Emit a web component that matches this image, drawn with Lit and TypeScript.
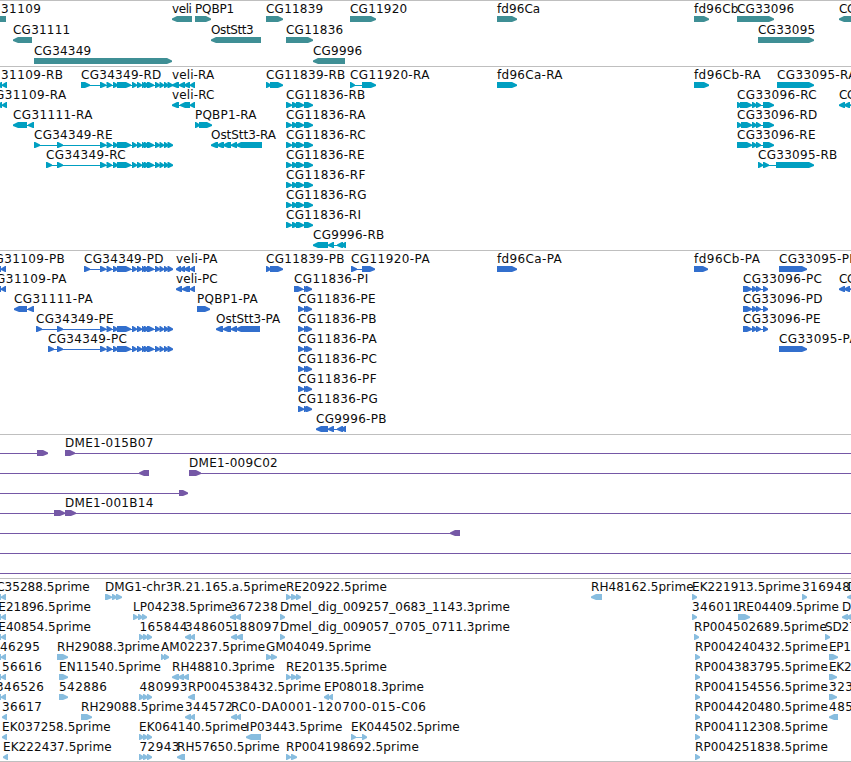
import { LitElement, html, svg, css } from "lit";
import { customElement, property } from "lit/decorators.js";

type Span = [number, number];
interface Feature {
  label: string;
  x: number;
  rev: boolean;
  exons: Span[];
  line?: Span;
}
interface Track {
  name: string;
  pitch: number;
  rows: Feature[][];
}

const VIEW = 851;

// Advance widths of the label face, in pixels.
const ADVANCE: Record<string, number> = {
  A: 8, B: 7.8, C: 8.2, D: 8.8, E: 7, G: 9, H: 8.8, I: 3.5, K: 7.6, L: 6.2, M: 10.2, N: 9, O: 9.4,
  P: 7, Q: 9.4, R: 7.8, S: 6.8, a: 6.8, b: 8, c: 6.2, d: 8, e: 7, f: 4.2, g: 7.8, h: 7.8, i: 3.2, l: 3.2,
  m: 11.4, p: 7.8, r: 4.8, s: 5.6, t: 4.3, v: 6.5, "-": 6.5, "_": 5.6, ".": 3.8,
};
const measure = (s: string) => [...s].reduce((w, c) => w + (ADVANCE[c] ?? 8), 0);

const f = (label: string, x: number, ...exons: Span[]): Feature => ({ label, x, rev: false, exons });
const r = (label: string, x: number, ...exons: Span[]): Feature => ({ label, x, rev: true, exons });
const lined = (feature: Feature, a: number, b: number): Feature => ({ ...feature, line: [a, b] });

const tail: Span[] = [
  [100, 106], [106.5, 112], [113, 118], [117, 131], [132, 137], [137, 142], [142, 146],
  [144, 149], [147, 154], [155, 160], [159.5, 164], [164, 168.5], [167.5, 173],
];
const ra: Span[] = [[286, 292], [292, 298], [296, 304], [304, 313]];
const pa: Span[] = [[298, 304], [304, 309], [306, 312]];
const left: Span[] = [[-4, 1], [1, 6]];
const left2: Span[] = [[-3, 2], [2, 7]];
const est: Span[] = [[139, 144], [143, 148], [147, 152]];
const re: Span[] = [[286, 291], [291, 297], [296, 301]];
const rc33: Span[] = [[752, 757], [756, 761], [763, 774]];
const pc33: Span[] = [[743, 752], [752, 757], [756, 761], [763, 768]];

const TRACKS: Track[] = [
  {
    name: "genes",
    pitch: 21,
    rows: [
      [
        r("31109", 1, [-20, 6]), r("veli", 172, [172, 192]), f("PQBP1", 195, [195, 211]),
        f("CG11839", 266, [266, 283]), f("CG11920", 350, [350, 376]), f("fd96Ca", 497, [497, 517]),
        f("fd96Cb", 694, [694, 709]), f("CG33096", 737, [737, 774]), r("CG", 839, [839, 870]),
      ],
      [
        r("CG31111", 13, [13, 32]), r("OstStt3", 211, [211, 261]), f("CG11836", 286, [286, 313]),
        f("CG33095", 758, [758, 814]),
      ],
      [f("CG34349", 34, [34, 172]), r("CG9996", 313, [313, 345])],
    ],
  },
  {
    name: "transcripts",
    pitch: 20,
    rows: [
      [
        r("31109-RB", 1, ...left2), f("CG34349-RD", 81, [81, 90], ...tail),
        r("veli-RA", 172, [172, 179], [179, 185], [184, 190], [190, 195]),
        f("CG11839-RB", 266, [266, 271], [270, 283]), f("CG11920-RA", 350, [350, 355], [362, 376]),
        f("fd96Ca-RA", 497, [497, 517]), f("fd96Cb-RA", 694, [694, 709]), f("CG33095-RA", 777, [777, 814]),
      ],
      [
        r("G31109-RA", -5, ...left2), r("veli-RC", 172, [172, 179], [180, 190], [190, 195]),
        f("CG11836-RB", 286, ...ra), f("CG33096-RC", 737, [737, 742], [740, 752], ...rc33),
        r("CG", 839, [839, 845], [844, 850], [850, 856]),
      ],
      [
        r("CG31111-RA", 13, [13, 27], [28, 34]), f("PQBP1-RA", 195, [195, 200], [199, 212]),
        f("CG11836-RA", 286, ...ra), f("CG33096-RD", 737, [737, 742], [741, 752], ...rc33),
      ],
      [
        f("CG34349-RE", 34, [34, 40], [57, 63], ...tail),
        r("OstStt3-RA", 211, [211, 218], [217, 224], [223, 231], [231, 237], [236, 262]),
        f("CG11836-RC", 286, ...ra), f("CG33096-RE", 737, [737, 752], ...rc33),
      ],
      [
        f("CG34349-RC", 46, [46, 52], [57, 63], ...tail), f("CG11836-RE", 286, ...ra),
        f("CG33095-RB", 758, [758, 763], [763, 769], [776, 814]),
      ],
      [f("CG11836-RF", 286, ...ra)],
      [f("CG11836-RG", 286, ...ra)],
      [f("CG11836-RI", 286, ...ra)],
      [r("CG9996-RB", 313, [313, 328], [328, 334], [337, 343], [341, 346])],
    ],
  },
  {
    name: "proteins",
    pitch: 20,
    rows: [
      [
        r("G31109-PB", -5.5, ...left), f("CG34349-PD", 84, [84, 90], ...tail),
        r("veli-PA", 176, [176, 181], [180, 185], [184, 190], [190, 195]),
        f("CG11839-PB", 266, [266, 271], [270, 283]), f("CG11920-PA", 351, [351, 357], [362, 375]),
        f("fd96Ca-PA", 497, [497, 517]), f("fd96Cb-PA", 694, [694, 708]), f("CG33095-PB", 779, [779, 807]),
      ],
      [
        r("G31109-PA", -4, ...left), r("veli-PC", 176, [176, 182], [182, 190], [190, 195]),
        f("CG11836-PI", 294, [294, 303], [304, 309], [306, 312]), f("CG33096-PC", 743, ...pc33),
        r("CG", 839, [839, 845], [844, 850], [850, 856]),
      ],
      [
        r("CG31111-PA", 14, [14, 27], [28, 34]), f("PQBP1-PA", 197, [197, 210]),
        f("CG11836-PE", 298, ...pa), f("CG33096-PD", 743, ...pc33),
      ],
      [
        f("CG34349-PE", 36, [36, 42], [57, 63], ...tail),
        r("OstStt3-PA", 216, [216, 223], [223, 231], [231, 237], [236, 260]),
        f("CG11836-PB", 298, ...pa), f("CG33096-PE", 743, ...pc33),
      ],
      [
        f("CG34349-PC", 48, [48, 54], [57, 63], ...tail), f("CG11836-PA", 298, ...pa),
        f("CG33095-PA", 779, [779, 807]),
      ],
      [f("CG11836-PC", 298, ...pa)],
      [f("CG11836-PF", 298, ...pa)],
      [f("CG11836-PG", 298, ...pa)],
      [r("CG9996-PB", 316, [316, 328], [328, 334], [337, 343], [341, 346])],
    ],
  },
  {
    name: "clones",
    pitch: 20,
    rows: [
      [lined(f("", 0, [37, 48]), 0, 48), lined(f("DME1-015B07", 65, [65, 75]), 65, VIEW)],
      [lined(r("", 0, [139, 149]), 0, 149), lined(f("DME1-009C02", 189, [189, 201]), 189, VIEW)],
      [lined(f("", 0, [179, 188]), 0, 188)],
      [lined(f("", 0, [54, 65]), 0, 65), lined(f("DME1-001B14", 65, [65, 76]), 65, VIEW)],
      [lined(r("", 0, [450, 460]), 0, 460)],
      [lined(f("", 0), 0, VIEW)],
      [lined(f("", 0), 0, VIEW)],
    ],
  },
  {
    name: "ests",
    pitch: 20,
    rows: [
      [
        r("EC35288.5prime", -11.5, ...left),
        f("DMG1-chr3R.21.165.a.5prime", 105, [105, 112], [112, 117], [116, 122]),
        f("RE20922.5prime", 286, ...re), r("RH48162.5prime", 591, [591, 602]),
        f("EK221913.5prime", 692, [692, 697]), f("316948", 802, [802, 807]), r("D", 847.5, [847, 856]),
      ],
      [
        r("RE21896.5prime", -10, ...left), f("LP04238.5prime", 133, [133, 138], [138, 143], [142, 147]),
        r("367238", 230, [230, 236], [235, 241]), f("Dmel_dig_009257_0683_1143.3prime", 280, [280, 285]),
        f("346011", 692, [692, 697]), f("RE04409.5prime", 738, [738, 750]), r("D", 842, [842, 848], [846, 856]),
      ],
      [
        r("RE40854.5prime", -10, ...left), f("165844", 139.5, ...est), r("348605", 185, [185, 191], [190, 195]),
        r("188097", 231.5, [231, 237], [236, 243]), f("Dmel_dig_009057_0705_0711.3prime", 280, [280, 285]),
        f("RP004502689.5prime", 694, [694, 699]), f("SD27", 825, [825, 830]),
      ],
      [
        r("46295", 0, ...left), f("RH29088.3prime", 57, [57, 68]), f("AM02237.5prime", 161, [161, 165], [164, 169]),
        f("GM04049.5prime", 266, [266, 272], [271, 277]), f("RP004240432.5prime", 695, [695, 700]),
        f("EP1", 829, [829, 838]),
      ],
      [
        r("56616", 2, ...left), f("EN11540.5prime", 59, [59, 68]),
        r("RH48810.3prime", 172, [172, 179], [178, 184], [183, 189]), f("RE20135.5prime", 286, ...re),
        f("RP004383795.5prime", 695, [695, 700]), f("EK2", 829, [829, 837]),
      ],
      [
        r("346526", -4, ...left), f("542886", 59, [59, 68]), f("480993", 139.5, ...est),
        r("RP004538432.5prime", 188, [188, 195]), r("EP08018.3prime", 324, [324, 329], [328, 333]),
        f("RP004154556.5prime", 695, [695, 700]), f("323", 829, [829, 837]),
      ],
      [
        r("36617", 2, [2, 7]), f("RH29088.5prime", 81, [81, 92]), r("344572", 185, [185, 191], [190, 195]),
        r("RC0-DA0001-120700-015-C06", 231, [231, 237], [236, 241]), f("RP004420480.5prime", 695, [695, 700]),
        r("485", 829, [829, 838]),
      ],
      [
        r("EK037258.5prime", 2, [2, 7]), f("EK064140.5prime", 139, ...est), r("IP03443.5prime", 246, [246, 261]),
        f("EK044502.5prime", 351, [351, 356], [362, 367]), f("RP004112308.5prime", 695, [695, 700]),
      ],
      [
        r("EK222437.5prime", 3, [3, 8]), f("72943", 139.5, ...est), r("RH57650.5prime", 177, [177, 185]),
        f("RP004198692.5prime", 286, [286, 291], [291, 297]), f("RP004251838.5prime", 695, [695, 700]),
      ],
    ],
  },
];

@customElement("track-row")
class TrackRow extends LitElement {
  @property({ attribute: false }) features: Feature[] = [];
  @property({ type: Number }) pitch = 20;

  static styles = css`
    :host { display: block; }
    .lane { display: block; overflow: visible; }
    .glyph { fill: currentColor; }
    .label { fill: #0c0c0c; font: 12px "DejaVu Sans", sans-serif; }
  `;

  // A box whose leading end narrows to a blunt tip.
  private exon([a, b]: Span, rev: boolean) {
    const head = Math.min(5, (b - a) * 0.8);
    const points = rev
      ? `${b},15 ${a + head},15 ${a},17.6 ${a},18.9 ${a + head},21 ${b},21`
      : `${a},15 ${b - head},15 ${b},17.6 ${b},18.9 ${b - head},21 ${a},21`;
    return svg`<polygon class="glyph" points=${points}></polygon>`;
  }

  private feature(d: Feature) {
    const ends = d.exons.flat();
    const [a, b] = d.line ?? [Math.min(...ends), Math.max(...ends)];
    const hasLine = d.line || d.exons.length > 1;
    return svg`
      ${hasLine ? svg`<rect class="glyph" x=${a} y="18" width=${b - a} height="1"></rect>` : null}
      ${d.exons.map((e) => this.exon(e, d.rev))}
      ${d.label
        ? svg`<text class="label" x=${d.x} y="12" textLength=${measure(d.label)}>${d.label}</text>`
        : null}`;
  }

  render() {
    return html`<svg class="lane" width=${VIEW} height=${this.pitch}>
      ${this.features.map((d) => this.feature(d))}
    </svg>`;
  }
}

@customElement("app-root")
class AppRoot extends LitElement {
  static styles = css`
    :host { display: block; width: 851px; height: 762px; overflow: hidden; background: #fff; }
    .browser { display: flex; flex-direction: column; }
    .track { box-sizing: border-box; border-top: 1px solid #bfbfbf; }
    .genes { height: 66px; color: #3f8f95; }
    .transcripts { height: 184px; color: #009fc1; }
    .proteins { height: 184px; color: #326fcd; }
    .clones { height: 144px; color: #7558a6; }
    .ests { height: 184px; color: #88bddf; border-bottom: 1px solid #bfbfbf; }
  `;

  render() {
    return html`<main class="browser">
      ${TRACKS.map(
        (t) => html`<section class="track ${t.name}">
          ${t.rows.map((row) => html`<track-row .features=${row} .pitch=${t.pitch}></track-row>`)}
        </section>`,
      )}
    </main>`;
  }
}
